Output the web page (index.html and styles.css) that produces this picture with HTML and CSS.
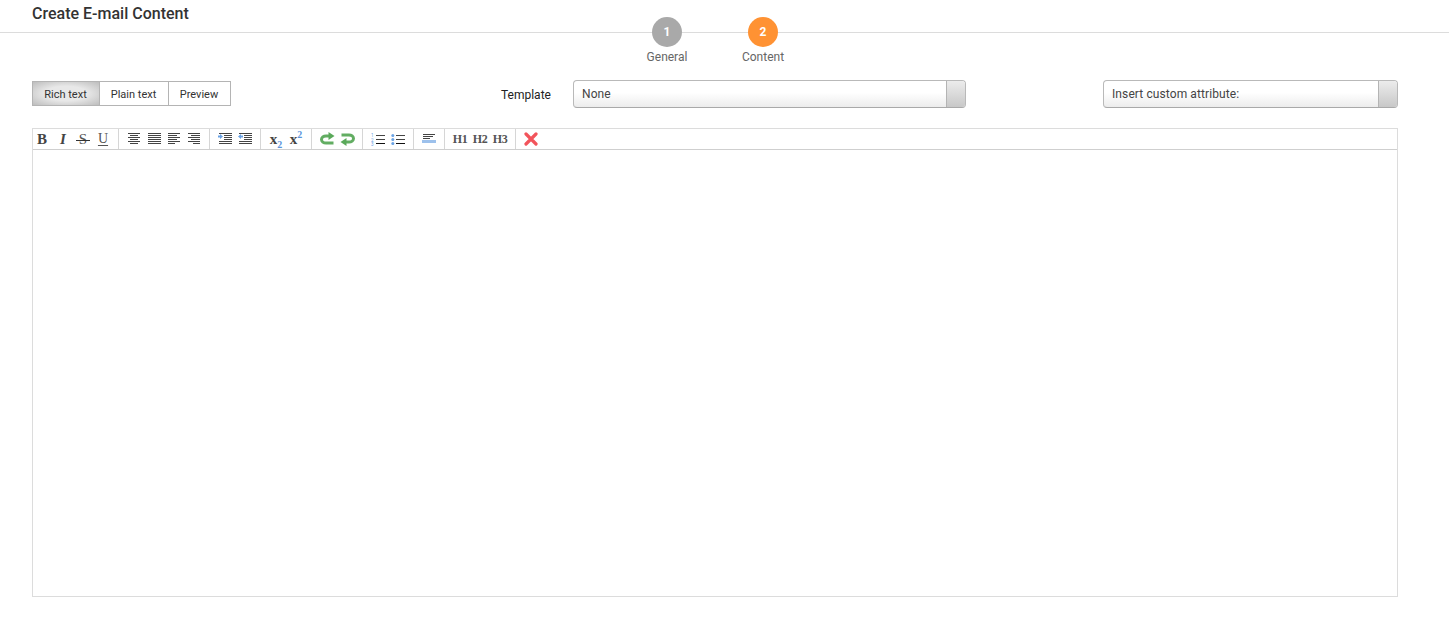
FILE: index.html
```html
<!DOCTYPE html>
<html lang="en">
<head>
<meta charset="utf-8">
<title>Create E-mail Content</title>
<link rel="stylesheet" href="styles.css">
</head>
<body>
<header class="page-header"><h1 class="page-title">Create E-mail Content</h1></header>
<ol class="stepper">
  <li class="step"><span class="step-num">1</span><span class="step-label">General</span></li>
  <li class="step step-active"><span class="step-num">2</span><span class="step-label">Content</span></li>
</ol>
<main class="content">
  <div class="controls">
    <div class="tabs">
      <button class="tab tab-active">Rich text</button>
      <button class="tab tab-plain">Plain text</button>
      <button class="tab tab-preview">Preview</button>
    </div>
    <label class="template-label">Template</label>
    <div class="select select-template"><span class="select-value">None</span><span class="select-arrow"></span></div>
    <div class="select select-attr"><span class="select-value">Insert custom attribute:</span><span class="select-arrow"></span></div>
  </div>
  <section class="editor">
    <div class="toolbar">
      <div class="group group-first">
        <span class="btn serif bold gl-b">B</span>
        <span class="btn serif bold italic gl-i">I</span>
        <span class="btn serif"><span class="strike">S</span></span>
        <span class="btn serif"><span class="under">U</span></span>
      </div>
      <div class="group">
        <span class="btn"><svg width="14" height="12" viewBox="0 0 14 12"><path class="ln" d="M1 .5h12M3 2.500h8M1 4.500h12M3 6.500h8M1 8.500h12M3 10.500h8"/></svg></span>
        <span class="btn"><svg width="14" height="12" viewBox="0 0 14 12"><path class="ln" d="M1 .5h13M1 2.500h13M1 4.500h13M1 6.500h13M1 8.500h13M1 10.500h13"/></svg></span>
        <span class="btn"><svg width="14" height="12" viewBox="0 0 14 12"><path class="ln" d="M1 .5h12M1 2.500h9M1 4.500h12M1 6.500h9M1 8.500h12M1 10.500h7"/></svg></span>
        <span class="btn"><svg width="14" height="12" viewBox="0 0 14 12"><path class="ln" d="M1 .5h12M4 2.500h9M1 4.500h12M4 6.500h9M1 8.500h12M6 10.500h7"/></svg></span>
      </div>
      <div class="group">
        <span class="btn"><svg width="14" height="12" viewBox="0 0 14 12"><path class="ln" d="M1 .5h13M6 2.500h8M6 4.500h8M6 6.500h8M1 8.500h13M1 10.500h13"/><path class="blue-fill" d="M0 2.500h2V1l3 2.500L2 6V4.500H0z"/></svg></span>
        <span class="btn"><svg width="14" height="12" viewBox="0 0 14 12"><path class="ln" d="M1 .5h13M6 2.500h8M6 4.500h8M6 6.500h8M1 8.500h13M1 10.500h13"/><path class="blue-fill" d="M5 2.500H3V1L0 3.500 3 6V4.500h2z"/></svg></span>
      </div>
      <div class="group">
        <span class="btn serif bold script"><span>x<sub class="blue">2</sub></span></span>
        <span class="btn serif bold script"><span>x<sup class="blue">2</sup></span></span>
      </div>
      <div class="group">
        <span class="btn"><svg width="15" height="14" viewBox="0 0 15 14"><path class="undo" d="M10 4H6C3.500 4 1.500 5.600 1.500 7.500S3.500 11 6 11h7.500"/><path class="green-fill" d="M8.500 0v8l6-4z"/></svg></span>
        <span class="btn"><svg width="15" height="14" viewBox="0 0 15 14"><path class="undo" d="M1.500 3H9c2.500 0 4.500 1.600 4.500 3.500S11.500 10 9 10H5"/><path class="green-fill" d="M6.500 6v8L.5 10z"/></svg></span>
      </div>
      <div class="group">
        <span class="btn"><svg width="14" height="13" viewBox="0 0 14 13"><path class="ln" d="M5 2.500h9M5 6.500h9"/><path class="ln-dark" d="M5 10.500h9"/><text class="mini" x="0" y="4">1</text><text class="mini" x="0" y="8.500">2</text><text class="mini" x="0" y="13">3</text></svg></span>
        <span class="btn"><svg width="14" height="13" viewBox="0 0 14 13"><path class="ln" d="M5 2.500h9M5 6.500h9"/><path class="ln-dark" d="M5 10.500h9"/><circle class="blue-fill" cx="1.800" cy="2.500" r="1.500"/><circle class="blue-fill" cx="1.800" cy="6.500" r="1.500"/><circle class="blue-fill" cx="1.800" cy="10.500" r="1.500"/></svg></span>
      </div>
      <div class="group">
        <span class="btn"><svg width="14" height="10" viewBox="0 0 14 10"><path class="ln" d="M1 .5h12M1 2.500h10M1 4.500h7"/><rect class="hr-bar" x="0" y="6" width="14" height="3"/></svg></span>
      </div>
      <div class="group">
        <span class="btn serif heading">H1</span>
        <span class="btn serif heading">H2</span>
        <span class="btn serif heading">H3</span>
      </div>
      <div class="group group-last">
        <span class="btn"><svg width="14" height="14" viewBox="0 0 14 14"><path class="close" d="M2 2l10 10M12 2L2 12"/></svg></span>
      </div>
    </div>
    <div class="editor-body"></div>
  </section>
</main>
</body>
</html>
```
FILE: styles.css
```css
* { box-sizing: border-box; }
html, body { margin: 0; padding: 0; }
body {
  position: relative;
  height: 624px;
  background: #fff;
  font-family: Roboto, "Liberation Sans", sans-serif;
  color: #333;
  overflow: hidden;
}
.page-header {
  height: 33px;
  padding: 5px 32px 0;
  border-bottom: 1px solid #dcdcdc;
}
.page-title {
  margin: 0;
  font-size: 16px;
  font-weight: 500;
  line-height: 17px;
  color: #333;
}
.stepper {
  position: absolute;
  top: 17px;
  left: 619px;
  display: flex;
  margin: 0;
  padding: 0;
  list-style: none;
}
.step {
  display: flex;
  flex-direction: column;
  align-items: center;
  width: 96px;
}
.step-num {
  width: 30px;
  height: 30px;
  border-radius: 50%;
  background: #a9a9a9;
  color: #fff;
  font-size: 12px;
  font-weight: 700;
  line-height: 30px;
  text-align: center;
}
.step-active .step-num { background: #ff9233; }
.step-label {
  margin-top: 3px;
  font-size: 12px;
  line-height: 14px;
  color: #666;
}
.content { padding: 47px 51px 0 32px; }
.controls {
  display: flex;
  align-items: center;
  height: 28px;
}
.tabs { display: flex; width: 199px; height: 25px; align-self: flex-start; margin-top: 1px; }
.tab {
  height: 25px;
  padding: 2px 1px 0 0;
  border: 1px solid #b4b4b4;
  border-left: 0;
  background: #fff;
  color: #333;
  font-family: inherit;
  font-size: 11px;
  line-height: 21px;
}
.tab-active {
  width: 68px;
  border-left: 1px solid #b4b4b4;
  background: radial-gradient(ellipse at center, #e8e8e8 45%, #bdbdbd 100%);
}
.tab-plain { width: 69px; }
.tab-preview { width: 62px; }
.template-label {
  margin-left: 270px;
  width: 72px;
  font-size: 12px;
  color: #222;
  padding-top: 2px;
}
.select {
  display: flex;
  height: 28px;
  border: 1px solid #b9b9b9;
  border-bottom-color: #a9a9a9;
  border-radius: 4px;
  background: linear-gradient(#fff 45%, #ececec);
  overflow: hidden;
}
.select-template { width: 393px; }
.select-attr { width: 295px; margin-left: 137px; }
.select-value {
  flex: 1;
  padding-left: 8px;
  font-size: 12px;
  letter-spacing: .1px;
  line-height: 26px;
  color: #444;
}
.select-arrow {
  width: 19px;
  border-left: 1px solid #b4b4b4;
  background: linear-gradient(#ececec, #c8c8c8);
}
.editor {
  margin-top: 20px;
  height: 469px;
  border: 1px solid #dcdcdc;
  display: flex;
  flex-direction: column;
}
.toolbar {
  display: flex;
  align-items: stretch;
  height: 21px;
  border-bottom: 1px solid #cfcfcf;
}
.group {
  display: flex;
  padding: 0 5px;
  border-right: 1px solid #d6d6d6;
  height: 20px;
}
.group-first { padding-left: 0; }
.group-last { border-right: 0; }
.btn {
  position: relative;
  display: flex;
  align-items: center;
  justify-content: center;
  width: 20px;
  height: 20px;
  color: #444;
  font-size: 14px;
}
.serif { font-family: "Liberation Serif", "Times New Roman", serif; }
.bold { font-weight: 700; }
.italic { font-style: italic; }
.gl-b { padding-right: 2px; font-size: 15px; }
.gl-i { font-size: 15px; }
.strike { position: relative; font-size: 15px; color: #555; }
.strike::after {
  content: "";
  position: absolute;
  left: -3px;
  right: -3px;
  top: 9px;
  height: 1px;
  background: #333;
}
.under { text-decoration: underline; text-underline-offset: 2px; font-size: 14px; color: #555; }
.script { font-size: 15px; }
.script sub, .script sup { font-size: 10px; font-weight: 700; line-height: 0; }
.blue { color: #5b95dc; }
.heading { font-size: 12px; font-weight: 700; color: #555; letter-spacing: -.5px; }
.ln { fill: none; stroke: #444; stroke-width: 1; }
.ln-dark { fill: none; stroke: #111; stroke-width: 1; }
.blue-fill { fill: #6aa2e4; }
.green-fill { fill: #5aa95a; }
.undo { fill: none; stroke: #62ad62; stroke-width: 3; }
.mini { font-family: Roboto, sans-serif; font-size: 4.500px; fill: #6aa2e4; }
.hr-bar { fill: #9dc1ec; }
.close { fill: none; stroke: #f2545b; stroke-width: 3.200; stroke-linecap: round; }
.editor-body { flex: 1; background: #fff; }
```
